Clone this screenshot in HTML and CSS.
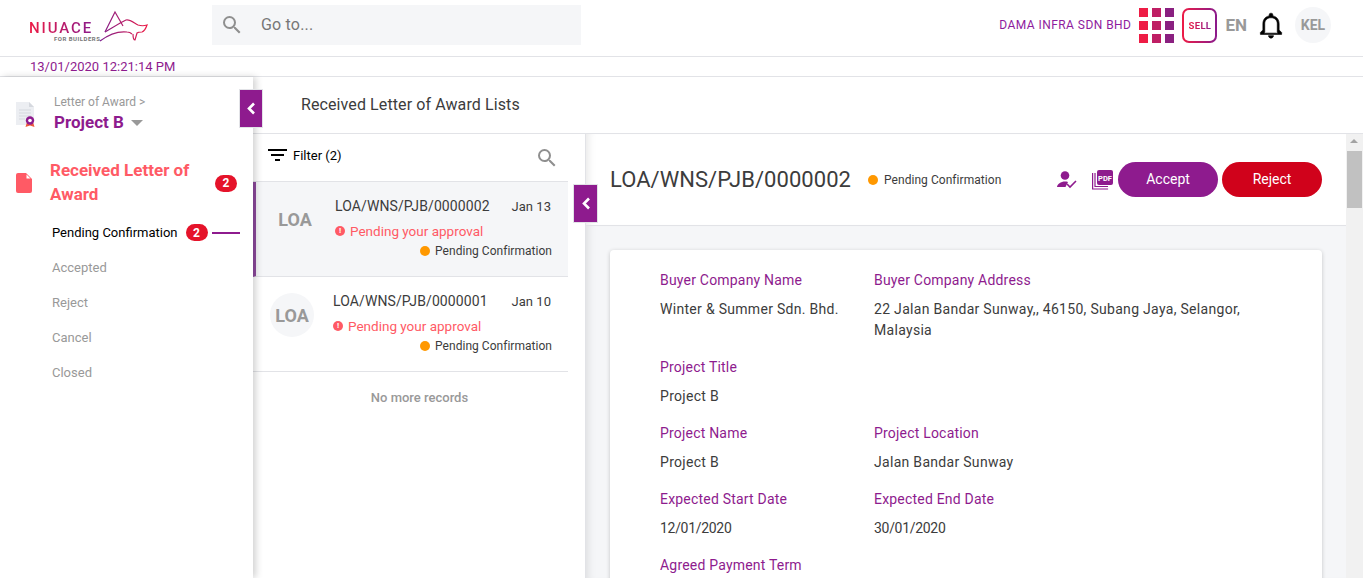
FILE: index.html
```html
<!DOCTYPE html>
<html lang="en">
<head>
    <meta charset="UTF-8">
    <title>Received Letter of Award Lists</title>
    <link rel="stylesheet" href="styles.css">
</head>
<body>
    <header class="topbar">
        <a class="logo">
            <svg width="122" height="44" viewBox="28 3 122 44">
                <defs>
                    <linearGradient id="bird" gradientUnits="userSpaceOnUse" x1="100" y1="0" x2="148" y2="0">
                        <stop offset="0" stop-color="#7d1f8e"/>
                        <stop offset="1" stop-color="#ee1c45"/>
                    </linearGradient>
                </defs>
                <g fill="none" stroke="url(#bird)" stroke-width="1.200">
                    <path d="M105 32L115 12l8 14"/>
                    <path d="M105 32C112 28 118 24 126 20c4-1 8 3 12 5 3 1 6 1 9 0-1 3-2 6-5 7-2 0-4 0-5 1l-2 7c-2 0-2-3-2-6"/>
                    <path d="M100 41c8-6 18-10 27-9 2 0 4 1 5 2"/>
                </g>
            </svg>
            <span class="logo-word">NIUACE</span>
            <span class="logo-sub">FOR BUILDERS</span>
        </a>
        <div class="search">
            <svg width="24" height="24" viewBox="0 0 24 24"><path fill="#8f8f8f" d="M15.5 14h-.79l-.28-.27A6.471 6.471 0 0 0 16 9.5 6.5 6.5 0 1 0 9.5 16c1.61 0 3.09-.59 4.23-1.57l.27.28v.79l5 4.99L20.49 19l-4.99-5zm-6 0C7.01 14 5 11.99 5 9.5S7.01 5 9.5 5 14 7.01 14 9.5 11.99 14 9.5 14z"/></svg>
            <span class="search-text">Go to...</span>
        </div>
        <div class="topbar-right">
            <span class="company">DAMA INFRA SDN BHD</span>
            <div class="apps">
                <i class="c1"></i><i class="c2"></i><i class="c3"></i>
                <i class="c1"></i><i class="c2"></i><i class="c3"></i>
                <i class="c1"></i><i class="c2"></i><i class="c3"></i>
            </div>
            <div class="sell"><span>SELL</span></div>
            <span class="lang">EN</span>
            <svg class="bell" width="30" height="30" viewBox="0 0 24 24"><path fill="#000" stroke="#000" stroke-width=".5" d="M12 22.500c1.100 0 2-.9 2-2h-4c0 1.100.9 2 2 2zm6.500-6.500v-5c0-3.100-1.600-5.600-5-6.300V4a1.500 1.500 0 0 0-3 0v.7c-3.400.7-5 3.200-5 6.300v5l-2 2v1.500h17V18l-2-2zm-.9 2.500H6.400l.6-1V11c0-2.800 2-4.800 5-4.800s5 2 5 4.800v6.500z"/></svg>
            <span class="user">KEL</span>
        </div>
    </header>
    <div class="datebar">13/01/2020 12:21:14 PM</div>

    <div class="main">
        <aside class="sidebar">
            <div class="project">
                <svg class="project-icon" width="24" height="28" viewBox="0 0 24 28">
                    <path fill="#eceef2" d="M1 1h13l5 5v18H1z"/>
                    <path fill="#d5d8de" d="M14 1l5 5h-5z"/>
                    <path stroke="#d5d8de" d="M4 9h12M4 12h12M4 15h12M4 18h6"/>
                    <path fill="#ee5a3c" d="M12 21l-1.500 5 4.500-1.500 4.500 1.500-1.500-5z"/>
                    <circle cx="15" cy="19.500" r="4.200" fill="#8e1b8e"/>
                    <circle cx="15" cy="19.500" r="1.800" fill="#fff"/>
                </svg>
                <div>
                    <div class="project-crumb">Letter of Award &gt;</div>
                    <div class="project-name">Project B <i class="caret"></i></div>
                </div>
            </div>
            <button class="collapse collapse-side"><svg width="10" height="13" viewBox="0 0 10 13"><path d="M8 1.500L3 6.500l5 5" fill="none" stroke="#fff" stroke-width="2.600"/></svg></button>
            <div class="menu-head">
                <svg width="18" height="22" viewBox="0 0 18 22"><path fill="#ff5a65" d="M3 1h8l6 6v12a2 2 0 0 1-2 2H3a2 2 0 0 1-2-2V3a2 2 0 0 1 2-2z"/><path fill="#fff" d="M11.500 2.500l4 4h-4z"/></svg>
                <span class="menu-title">Received Letter of Award</span>
                <span class="badge">2</span>
            </div>
            <ul class="menu">
                <li class="active"><span>Pending Confirmation</span><span class="badge">2</span><i class="menu-line"></i></li>
                <li>Accepted</li>
                <li>Reject</li>
                <li>Cancel</li>
                <li>Closed</li>
            </ul>
        </aside>

        <section class="content">
            <h1 class="page-title">Received Letter of Award Lists</h1>
            <div class="split">
                <div class="list">
                    <div class="list-tools">
                        <svg width="20" height="14" viewBox="0 0 20 14"><path fill="#000" d="M0 1h19v2H0zM3 6h13v2H3zM7 11h5v2H7z"/></svg>
                        <span>Filter (2)</span>
                        <svg class="list-search" width="24" height="24" viewBox="0 0 24 24"><path fill="#8f8f8f" d="M15.5 14h-.79l-.28-.27A6.471 6.471 0 0 0 16 9.5 6.5 6.5 0 1 0 9.5 16c1.61 0 3.09-.59 4.23-1.57l.27.28v.79l5 4.99L20.49 19l-4.99-5zm-6 0C7.01 14 5 11.99 5 9.5S7.01 5 9.5 5 14 7.01 14 9.5 11.99 14 9.5 14z"/></svg>
                    </div>
                    <article class="row row-active">
                        <span class="avatar">LOA</span>
                        <div class="row-body">
                            <div class="row-top"><span>LOA/WNS/PJB/0000002</span><span class="row-date">Jan 13</span></div>
                            <div class="row-alert"><i class="alert-dot">!</i>Pending your approval</div>
                            <div class="row-status"><i class="dot"></i>Pending Confirmation</div>
                        </div>
                    </article>
                    <article class="row">
                        <span class="avatar">LOA</span>
                        <div class="row-body">
                            <div class="row-top"><span>LOA/WNS/PJB/0000001</span><span class="row-date">Jan 10</span></div>
                            <div class="row-alert"><i class="alert-dot">!</i>Pending your approval</div>
                            <div class="row-status"><i class="dot"></i>Pending Confirmation</div>
                        </div>
                    </article>
                    <div class="no-more">No more records</div>
                </div>
                <div class="gutter">
                    <button class="collapse"><svg width="10" height="13" viewBox="0 0 10 13"><path d="M8 1.500L3 6.500l5 5" fill="none" stroke="#fff" stroke-width="2.600"/></svg></button>
                </div>
                <div class="detail">
                    <div class="detail-head">
                        <h2>LOA/WNS/PJB/0000002</h2>
                        <span class="detail-status"><i class="dot"></i>Pending Confirmation</span>
                        <div class="detail-actions">
                            <svg class="act-user" width="20" height="18" viewBox="0 0 20 18"><circle cx="8" cy="4.500" r="4.300" fill="#8e1b8e"/><path fill="#8e1b8e" d="M0 16c0-3 4-5.500 8-5.500 1 0 2 .1 3 .4L8.500 16z"/><path d="M10 13l3 3 6-6" fill="none" stroke="#8e1b8e" stroke-width="1.600"/></svg>
                            <svg class="act-pdf" width="21" height="20" viewBox="0 0 21 20"><path fill="none" stroke="#8e1b8e" stroke-width="1.200" d="M.6 3v16h15.500M3 3v13.500h13"/><rect x="5" width="16" height="15" rx="2" fill="#8e1b8e"/><text x="13" y="10.500" class="pdf-text">PDF</text></svg>
                            <button class="btn btn-accept">Accept</button>
                            <button class="btn btn-reject">Reject</button>
                        </div>
                    </div>
                    <div class="detail-body">
                        <div class="card">
                            <div class="field-row">
                                <div class="field"><label>Buyer Company Name</label><p>Winter &amp; Summer Sdn. Bhd.</p></div>
                                <div class="field field-wide"><label>Buyer Company Address</label><p>22 Jalan Bandar Sunway,, 46150, Subang Jaya, Selangor, Malaysia</p></div>
                            </div>
                            <div class="field-row">
                                <div class="field"><label>Project Title</label><p>Project B</p></div>
                            </div>
                            <div class="field-row">
                                <div class="field"><label>Project Name</label><p>Project B</p></div>
                                <div class="field field-wide"><label>Project Location</label><p>Jalan Bandar Sunway</p></div>
                            </div>
                            <div class="field-row">
                                <div class="field"><label>Expected Start Date</label><p class="num">12/01/2020</p></div>
                                <div class="field field-wide"><label>Expected End Date</label><p class="num">30/01/2020</p></div>
                            </div>
                            <div class="field-row">
                                <div class="field"><label>Agreed Payment Term</label></div>
                            </div>
                        </div>
                    </div>
                    <div class="scrollbar"><i class="scroll-up"></i><i class="scroll-thumb"></i></div>
                </div>
            </div>
        </section>
    </div>
</body>
</html>
```

FILE: styles.css
```css
* {
    box-sizing: border-box;
}
html, body {
    height: 100%;
}
body {
    margin: 0;
    height: 578px;
    overflow: hidden;
    background: #fff;
    color: #3c3c3c;
    font-family: Roboto, "Liberation Sans", sans-serif;
    font-size: 14px;
}
h1, h2, p, ul {
    margin: 0;
    padding: 0;
}
i {
    font-style: normal;
}
button {
    font-family: inherit;
    border: 0;
    cursor: pointer;
}

.topbar {
    display: flex;
    align-items: center;
    height: 57px;
    border-bottom: 1px solid #e2e3e7;
    padding: 0 32px 6px 28px;
}
.logo {
    position: relative;
    display: block;
    width: 184px;
    height: 44px;
    flex: none;
}
.logo svg {
    position: absolute;
    left: 0;
    top: 0;
}
.logo-word {
    position: absolute;
    left: 1px;
    top: 19px;
    font-size: 15px;
    font-weight: 500;
    letter-spacing: 1.900px;
    line-height: 12px;
    background: linear-gradient(90deg, #ee1c45, #8a1a8c);
    -webkit-background-clip: text;
    background-clip: text;
    color: transparent;
}
.logo-sub {
    position: absolute;
    left: 26px;
    top: 32px;
    font-size: 6px;
    font-weight: 700;
    letter-spacing: .5px;
    line-height: 8px;
    color: #777;
}
.search {
    display: flex;
    align-items: center;
    gap: 17px;
    width: 369px;
    height: 40px;
    background: #f5f6f8;
    padding-left: 8px;
    font-size: 16px;
    letter-spacing: .2px;
    color: #777;
}
.search-text {
    padding-bottom: 2px;
}
.topbar-right {
    display: flex;
    align-items: center;
    margin-left: auto;
}
.company {
    font-size: 12px;
    letter-spacing: .45px;
    color: #8e1b9e;
    margin-right: 8px;
}
.apps {
    display: grid;
    grid-template-columns: repeat(3, 9px);
    grid-auto-rows: 9px;
    gap: 4px;
    margin-right: 8px;
}
.apps i {
    display: block;
}
.apps .c1 { background: #ee1c45; }
.apps .c2 { background: #bf1e64; }
.apps .c3 { background: #8a2080; }
.sell {
    width: 35px;
    height: 35px;
    border: 2px solid transparent;
    border-radius: 7px;
    background: linear-gradient(#fff, #fff) padding-box, linear-gradient(90deg, #ee1c45, #8a1a8c) border-box;
    display: flex;
    align-items: center;
    justify-content: center;
    margin-right: 8px;
}
.sell span {
    font-size: 9.500px;
    font-weight: 700;
    letter-spacing: .3px;
    background: linear-gradient(90deg, #ee1c45, #8a1a8c);
    -webkit-background-clip: text;
    background-clip: text;
    color: transparent;
}
.lang {
    font-size: 17px;
    font-weight: 700;
    color: #999;
    margin-right: 9px;
}
.bell {
    margin-right: 9px;
}
.user {
    width: 36px;
    height: 36px;
    border-radius: 50%;
    background: #f5f6f8;
    color: #999;
    font-size: 14px;
    font-weight: 700;
    display: flex;
    align-items: center;
    justify-content: center;
}
.datebar {
    height: 20px;
    padding-left: 30px;
    border-bottom: 1px solid #e2e3e7;
    font-size: 13px;
    line-height: 19px;
    color: #8e1b8e;
}

.main {
    display: flex;
    height: 501px;
}
.sidebar {
    position: relative;
    width: 253px;
    flex: none;
    box-shadow: 3px 0 7px rgba(0,0,0,.18);
    z-index: 2;
    background: #fff;
}
.project {
    display: flex;
    align-items: flex-start;
    gap: 15px;
    padding: 18px 0 0 15px;
    height: 79px;
}
.project-icon {
    margin-top: 6px;
}
.project-crumb {
    font-size: 12px;
    color: #999;
    line-height: 14px;
}
.project-name {
    margin-top: 3px;
    font-size: 17px;
    font-weight: 700;
    line-height: 20px;
    color: #8e1b8e;
}
.caret {
    display: inline-block;
    width: 0;
    height: 0;
    margin: 0 0 2px 3px;
    border: 6px solid transparent;
    border-top: 6px solid #999;
    border-bottom: 0;
}
.collapse {
    width: 24px;
    height: 39px;
    padding: 0;
    background: #8e1b8e;
    border: 1px solid #e2e3e7;
    display: flex;
    align-items: center;
    justify-content: center;
}
.collapse-side {
    position: absolute;
    left: 239px;
    top: 12px;
    z-index: 3;
}
.menu-head {
    display: flex;
    align-items: center;
    padding-left: 15px;
    height: 54px;
}
.menu-title {
    margin: 0 0 2px 17px;
    width: 165px;
    font-size: 17px;
    font-weight: 700;
    line-height: 24px;
    color: #ff5a65;
}
.badge {
    display: inline-flex;
    align-items: center;
    justify-content: center;
    width: 22px;
    height: 17px;
    border-radius: 9px;
    background: #e5132a;
    color: #fff;
    font-size: 12px;
    font-weight: 700;
}
.menu {
    list-style: none;
    padding: 0 0 0 52px;
    margin-top: 5px;
}
.menu li {
    display: flex;
    align-items: center;
    height: 35px;
    font-size: 13px;
    color: #999;
}
.menu .active {
    color: #000;
}
.menu .active .badge {
    margin-left: 8px;
}
.menu-line {
    width: 28px;
    height: 2px;
    background: #8e1b8e;
    margin-left: 4px;
}

.content {
    flex: 1;
    min-width: 0;
    display: flex;
    flex-direction: column;
}
.page-title {
    height: 57px;
    padding-left: 48px;
    font-size: 16px;
    font-weight: 400;
    letter-spacing: .1px;
    line-height: 55px;
    color: #3c3c3c;
    border-bottom: 1px solid #e2e3e7;
}
.split {
    display: flex;
    flex: 1;
    min-height: 0;
}
.list {
    width: 315px;
    flex: none;
}
.list-tools {
    display: flex;
    align-items: center;
    height: 48px;
    padding: 0 9px 5px 15px;
    gap: 5px;
    font-size: 13px;
    color: #000;
    border-bottom: 1px solid #e2e3e7;
}
.list-search {
    margin: 5px 0 0 auto;
}
.row {
    display: flex;
    height: 95px;
    padding: 14px 16px 0 17px;
    border-bottom: 1px solid #e2e3e7;
    gap: 19px;
}
.row-active {
    background: #f5f6f8;
    border-left: 3px solid #8e4a9e;
    padding-left: 22px;
    gap: 23px;
}
.avatar {
    flex: none;
    width: 44px;
    height: 44px;
    margin-top: 2px;
    border-radius: 50%;
    background: #f5f6f8;
    color: #999;
    font-size: 18px;
    font-weight: 700;
    display: flex;
    align-items: center;
    justify-content: center;
}
.row-active .avatar {
    width: 34px;
    margin-top: 1px;
}
.row-body {
    flex: 1;
    min-width: 0;
}
.row-top {
    display: flex;
    justify-content: space-between;
    font-size: 14px;
    letter-spacing: .1px;
    line-height: 20px;
    color: #3c3c3c;
}
.row-date {
    padding: 1px 1px 0 0;
    font-size: 13px;
    letter-spacing: .05px;
}
.row-alert {
    display: flex;
    align-items: center;
    gap: 5px;
    margin-top: 4px;
    font-size: 13.500px;
    line-height: 20px;
    color: #ff5a65;
}
.alert-dot {
    width: 10px;
    height: 10px;
    border-radius: 50%;
    background: #ff5a65;
    color: #fff;
    font-size: 8px;
    font-weight: 700;
    line-height: 10px;
    text-align: center;
}
.row-status {
    display: flex;
    align-items: center;
    justify-content: flex-end;
    gap: 5px;
    margin-top: 1px;
    font-size: 12px;
    letter-spacing: .03px;
    line-height: 18px;
}
.dot {
    display: inline-block;
    width: 10px;
    height: 10px;
    border-radius: 50%;
    background: #ff9800;
}
.no-more {
    text-align: center;
    padding: 18px 0 0 18px;
    font-size: 13px;
    font-weight: 500;
    color: #999;
}
.gutter {
    width: 18px;
    flex: none;
    background: #fff;
    border-right: 1px solid #e2e3e7;
    position: relative;
    z-index: 1;
}
.gutter .collapse {
    position: absolute;
    left: 5px;
    top: 50px;
    width: 25px;
}
.detail {
    position: relative;
    flex: 1;
    min-width: 0;
    padding-right: 17px;
    display: flex;
    flex-direction: column;
}
.detail-head {
    display: flex;
    align-items: center;
    height: 92px;
    padding: 0 24px 0 24px;
    border-bottom: 1px solid #e2e3e7;
    box-shadow: inset 9px 0 8px -7px rgba(0,0,0,.1);
}
.detail-head h2 {
    font-size: 22px;
    font-weight: 400;
    letter-spacing: .05px;
    color: #3c3c3c;
}
.detail-status {
    display: flex;
    align-items: center;
    gap: 6px;
    margin-left: 17px;
    font-size: 12px;
    letter-spacing: .05px;
}
.detail-actions {
    display: flex;
    align-items: center;
    margin-left: auto;
}
.act-user {
    margin-right: 15px;
}
.act-pdf {
    margin-right: 5px;
}
.pdf-text {
    font-family: Roboto, sans-serif;
    font-size: 7.500px;
    font-weight: 700;
    fill: #fff;
    text-anchor: middle;
}
.btn {
    width: 100px;
    height: 35px;
    padding-bottom: 2px;
    border-radius: 18px;
    color: #fff;
    font-size: 14px;
}
.btn-accept {
    background: #8e1b8e;
    margin-right: 4px;
}
.btn-reject {
    background: #d0021b;
}
.detail-body {
    flex: 1;
    min-height: 0;
    background: #f5f6f8;
    padding: 24px 24px 0 24px;
    overflow: hidden;
    box-shadow: inset 9px 0 8px -7px rgba(0,0,0,.1);
}
.card {
    background: #fff;
    border-radius: 4px;
    box-shadow: 0 1px 4px rgba(0,0,0,.2);
    padding: 20px 50px 24px;
}
.field-row {
    display: flex;
    margin-bottom: 16px;
}
.field {
    width: 214px;
    flex: none;
}
.field-wide {
    flex: 1;
    width: auto;
}
.field label {
    display: block;
    font-size: 14px;
    letter-spacing: .2px;
    line-height: 20px;
    color: #8e1b8e;
}
.field p {
    margin-top: 9px;
    font-size: 14px;
    letter-spacing: .3px;
    line-height: 21px;
    color: #3c3c3c;
}
.field .num {
    letter-spacing: -.3px;
}
.scrollbar {
    position: absolute;
    right: 0;
    top: 0;
    bottom: 0;
    width: 17px;
    background: #f1f1f1;
}
.scroll-up {
    position: absolute;
    left: 4px;
    top: 5px;
    border: 4px solid transparent;
    border-bottom: 4px solid #a3a3a3;
    border-top: 0;
}
.scroll-thumb {
    position: absolute;
    left: 1px;
    top: 17px;
    width: 15px;
    height: 57px;
    background: #c1c1c1;
}
```
